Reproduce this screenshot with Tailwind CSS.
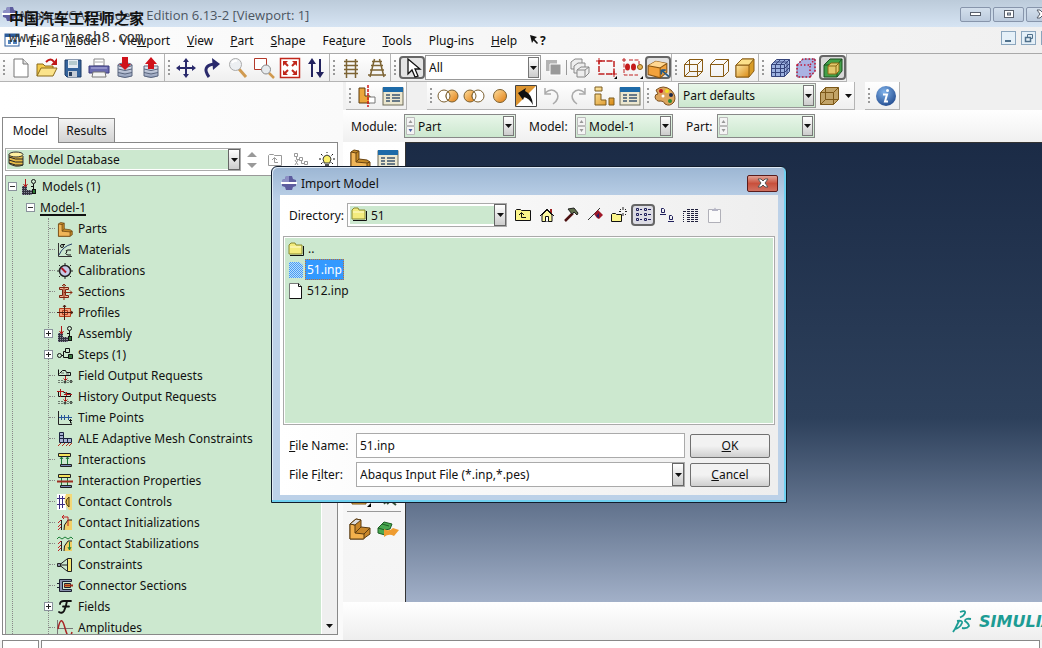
<!DOCTYPE html>
<html lang="en">
<head>
    <meta charset="UTF-8">
    <meta name="viewport" content="width=device-width, initial-scale=1.0">
    <title>Abaqus/CAE Student Edition 6.13-2 [Viewport: 1]</title>
    <script src="https://cdn.jsdelivr.net/npm/@tailwindcss/browser@4"></script>
</head>
<body class="flex h-screen flex-col overflow-hidden bg-[#f4f4f4] font-['Noto_Sans','Noto_Sans_CJK_SC',sans-serif] text-[12px] leading-[21px] text-[#111]">

    <!-- Shared gradients and repeated icons -->
    <svg class="absolute size-0" aria-hidden="true">
        <defs>
            <linearGradient id="gold" x1="0" y1="0" x2="1" y2="1"><stop offset="0" stop-color="#fdeaa8"/><stop offset="1" stop-color="#d98a14"/></linearGradient>
            <linearGradient id="orange" x1="0" y1="0" x2="1" y2="1"><stop offset="0" stop-color="#ffe0a0"/><stop offset="1" stop-color="#e07c10"/></linearGradient>
            <linearGradient id="steel" x1="0" y1="0" x2="0" y2="1"><stop offset="0" stop-color="#e8ecf4"/><stop offset="1" stop-color="#8f9cb8"/></linearGradient>
            <radialGradient id="ball" cx=".4" cy=".3" r=".8"><stop offset="0" stop-color="#7fb2ea"/><stop offset="1" stop-color="#1c4488"/></radialGradient>
            <pattern id="dither" width="2" height="2" patternUnits="userSpaceOnUse"><rect width="2" height="2" fill="#b4dcff"/><path d="M0 0h1v1H0zM1 1h1v1H1z" fill="#4a9cf0"/></pattern>
            <symbol id="i-arrow" viewBox="0 0 7 4"><path d="M0 0h7L3.500 4z" fill="#111"/></symbol>
            <symbol id="i-app" viewBox="0 0 16 16">
                <path d="M5 1h6l1 3 3 1v6l-3 1-1 3H5l-1-3-3-1V5l3-1z" fill="#5d5c9e"/><path d="M5 1h3v6H1V5l3-1z" fill="#8d8fc4"/><path d="M0 7h16v2H0z" fill="#fff"/>
            </symbol>
            <symbol id="i-folder" viewBox="0 0 16 14">
                <path d="M1 12V3l2-2h4l1 2h6v9z" fill="#f3ec7e" stroke="#8a8a30"/><path d="M2 13.500h13.500V4" fill="none" stroke="#111"/><path d="M2 5h11" stroke="#fffbd0"/>
            </symbol>
            <symbol id="i-table" viewBox="0 0 22 22">
                <rect x="1" y="3" width="20" height="17" fill="#ece7cf" stroke="#6d6a58"/><rect x="1" y="2" width="20" height="5" fill="#1d6aa8"/>
                <path d="M4 10h4M4 13h4M4 16h4M10 10h8M10 13h8M10 16h8" stroke="#3b5670" stroke-width="1.500"/>
            </symbol>
            <symbol id="i-part" viewBox="0 0 22 22">
                <path d="M2 4l3-2 5 1v8l8 1 3 2v5l-3 2H2z" fill="#c58a28" stroke="#6a4410"/><path d="M2 4l5 1v9l11 1v6H2z" fill="#f0b558" stroke="#6a4410"/><path d="M7 5l3-2M7 14l3-3M18 15l3-1" stroke="#6a4410"/>
            </symbol>
            <symbol id="i-assembly" viewBox="0 0 16 16">
                <path d="M1 7h5v4h5v5H1z" fill="#8b8b9c"/><path d="M1 8.500h5M1 10.500h5M1 12.500h10M1 14.500h10M2.500 7v9M4.500 7v9M6.500 11v5M8.500 11v5" stroke="#333340"/>
                <path d="M4.500 0v8M2.500 5l2 3 2-3" stroke="#b01818" fill="none"/>
                <circle cx="12.500" cy="2.500" r="2" fill="none" stroke="#111"/><path d="M12.500 5v6M10 7.500h3" stroke="#111"/><rect x="11.500" y="10.500" width="3" height="4" fill="#2e7a36" stroke="#111"/>
            </symbol>
        </defs>
    </svg>

    <!-- Title bar -->
    <header class="flex h-[27px] shrink-0 items-center bg-linear-to-b from-[#bccbda] to-[#d6e4f3] pl-0.5">
        <svg class="size-4"><use href="#i-app"/></svg>
        <h1 class="grow pt-1 font-['Open_Sans',sans-serif] text-[13px] text-[#4c5561]">Abaqus/CAE Student Edition 6.13-2 [Viewport: 1]</h1>
        <div class="-mr-[15px] flex h-4 gap-0.5 pt-px text-[#59606c]">
            <button aria-label="Minimize" class="grid w-[31px] place-items-center rounded-xs border border-[#8795ab] bg-linear-to-b from-[#d3dfec] to-[#bccbdd]"><svg class="h-1.5 w-3" viewBox="0 0 12 6"><rect x=".5" y="1.500" width="10" height="3" fill="#fff" stroke="currentColor"/></svg></button>
            <button aria-label="Restore" class="grid w-[31px] place-items-center rounded-xs border border-[#8795ab] bg-linear-to-b from-[#d3dfec] to-[#bccbdd]"><svg class="h-2.5 w-3" viewBox="0 0 12 10"><rect x="1.500" y="1.500" width="9" height="7" fill="#fff" stroke="currentColor"/><rect x="4.500" y="4" width="3" height="2" fill="#bccbdd" stroke="currentColor"/></svg></button>
            <button aria-label="Close" class="grid w-[31px] place-items-center rounded-xs border border-[#8795ab] bg-linear-to-b from-[#d3dfec] to-[#bccbdd]"><svg class="h-2.5 w-3" viewBox="0 0 12 10"><path d="M1 1h3l2 2 2-2h3L8 5l3 4H8L6 7 4 9H1l3-4z" fill="#fff" stroke="currentColor"/></svg></button>
        </div>
    </header>

    <!-- Menu bar -->
    <nav class="flex h-[26px] shrink-0 items-center bg-linear-to-r from-[#fdfdfd] to-[#f0f0f0] pl-1">
        <svg class="mr-2.5 size-4" viewBox="0 0 16 16"><rect x="1" y="2" width="14" height="12" fill="#fff" stroke="#2c5c9c"/><path d="M1 2h14v3H1z" fill="#2c5c9c"/><path d="M4 8h3v4H4zM9 8h4v4H9z" fill="#4f81bd"/></svg>
        <div class="flex grow items-center gap-[17px]">
            <a href="#" class="w-[18px]"><u>F</u>ile</a>
            <a href="#" class="w-[38px]"><u>M</u>odel</a>
            <a href="#" class="w-[50px]">Vie<u>w</u>port</a>
            <a href="#"><u>V</u>iew</a>
            <a href="#"><u>P</u>art</a>
            <a href="#"><u>S</u>hape</a>
            <a href="#">Fea<u>t</u>ure</a>
            <a href="#"><u>T</u>ools</a>
            <a href="#">Plu<u>g</u>-ins</a>
            <a href="#"><u>H</u>elp</a>
            <button aria-label="Context help" class="-ml-1 flex items-center font-bold"><svg class="size-2.5" viewBox="0 0 10 10"><path d="M0 0l7 2-2.500 2L8 8 7 9 3.500 5.500 2 8z" fill="#111"/></svg>?</button>
        </div>
        <div class="-mr-3.5 flex items-start gap-[5px] pb-1">
            <button aria-label="Minimize viewport" class="h-3.5 w-[15px] border border-[#8aa5bd] bg-[#e5f0f8]"><svg viewBox="0 0 13 12"><path d="M3 9h6" stroke="#50718c" stroke-width="2"/></svg></button>
            <button aria-label="Restore viewport" class="h-3.5 w-[15px] border border-[#8aa5bd] bg-[#e5f0f8]"><svg viewBox="0 0 13 12" fill="none" stroke="#50718c"><path d="M5.500 5V2.500h5v4H9"/><path d="M3.500 5.500h5v4h-5z" stroke-width="1.500"/></svg></button>
            <button aria-label="Close viewport" class="h-3.5 w-[15px] border border-[#8aa5bd] bg-[#e5f0f8]"></button>
        </div>
    </nav>

    <!-- Main toolbar -->
    <div class="flex h-[29px] shrink-0 border-t border-[#a9a9a9] bg-[#f0f0f0]">
        <div class="flex border-r border-b border-[#b4b4b4] bg-linear-to-b from-white to-[#efefef]">
            <span class="my-1.5 ml-[3px] w-[5px] border-l-2 border-dotted border-[#999]"></span>
            <button aria-label="New" class="grid w-[26px] place-items-center"><svg class="size-[22px]" viewBox="0 0 22 22"><path d="M4 2h9l5 5v13H4z" fill="#fff" stroke="#777"/><path d="M13 2v5h5" fill="#ddd" stroke="#777"/></svg></button>
            <button aria-label="Open" class="grid w-[26px] place-items-center"><svg class="size-[22px]" viewBox="0 0 22 22"><path d="M1 19V7h6l2 2h8v4" fill="#f4cb4c" stroke="#8a6a1a"/><path d="M1 19l4-8h16l-4 8z" fill="#fbe38a" stroke="#8a6a1a"/><path d="M10 5q5-5 8 0" fill="none" stroke="#c01818" stroke-width="2"/><path d="M21 1v7h-6z" fill="#c01818"/></svg></button>
            <button aria-label="Save" class="grid w-[26px] place-items-center"><svg class="size-[22px]" viewBox="0 0 22 22"><path d="M3 3h16v17H5l-2-2z" fill="#35639b" stroke="#1f3c66"/><path d="M6 3h10v8H6z" fill="#e4ebf3"/><path d="M7 5h8M7 7h8" stroke="#8aa"/><path d="M6 14h9v6H6z" fill="#c5ccd6"/><path d="M7 15h3v4H7z" fill="#263c5c"/></svg></button>
            <button aria-label="Print" class="grid w-[26px] place-items-center"><svg class="size-[22px]" viewBox="0 0 22 22"><path d="M6 2h10v7H6z" fill="#fff" stroke="#888"/><path d="M7 5h8" stroke="#aaa"/><path d="M1 9h20v7H1z" fill="#6a6bb0" stroke="#3b3b7c"/><path d="M3 11h16" stroke="#b8b8e0"/><path d="M5 15h12l1 5H4z" fill="#f4f4f4" stroke="#777"/></svg></button>
            <button aria-label="Save to database" class="grid w-[26px] place-items-center"><svg class="size-[22px]" viewBox="0 0 22 22"><g fill="url(#steel)" stroke="#59657e"><path d="M4 8v11q7 3 14 0V8z"/><path d="M4 12q7 3 14 0M4 15.500q7 3 14 0" fill="none"/><ellipse cx="11" cy="8" rx="7" ry="2"/></g><path d="M8 0h6v7h3l-6 6-6-6h3z" fill="#d0121b"/></svg></button>
            <button aria-label="Load from database" class="grid w-[26px] place-items-center"><svg class="size-[22px]" viewBox="0 0 22 22"><g fill="url(#steel)" stroke="#59657e"><path d="M4 9v10q7 3 14 0V9z"/><path d="M4 12q7 3 14 0M4 15.500q7 3 14 0" fill="none"/></g><path d="M8 12h6V7h3l-6-7-6 7h3z" fill="#d0121b"/></svg></button>
        </div>
        <div class="flex border-r border-b border-[#b4b4b4] bg-linear-to-b from-white to-[#efefef]">
            <span class="my-1.5 ml-[3px] w-[5px] border-l-2 border-dotted border-[#999]"></span>
            <button aria-label="Pan" class="grid w-[26px] place-items-center"><svg class="size-[22px]" viewBox="0 0 22 22"><path d="M11 4v14M4 11h14" stroke="#2a2a6c" stroke-width="2"/><path d="M11 1l3 4H8zM11 21l3-4H8zM1 11l4-3v6zM21 11l-4-3v6z" fill="#2a2a6c"/></svg></button>
            <button aria-label="Rotate" class="grid w-[26px] place-items-center"><svg class="size-[22px]" viewBox="0 0 22 22"><path d="M8 20Q0 9 13 7" fill="none" stroke="#2a2a6c" stroke-width="3"/><path d="M11 1l8 6-7 6z" fill="#2a2a6c"/></svg></button>
            <button aria-label="Magnify" class="grid w-[26px] place-items-center"><svg class="size-[22px]" viewBox="0 0 22 22"><path d="M12 12l7 8" stroke="#d09a50" stroke-width="3"/><circle cx="8.500" cy="7.500" r="6" fill="#eceff2" stroke="#aaa"/><path d="M5 6q2-3 5-2" fill="none" stroke="#fff" stroke-width="2"/></svg></button>
            <button aria-label="Box zoom" class="grid w-[26px] place-items-center"><svg class="size-[22px]" viewBox="0 0 22 22"><path d="M1.500 1.500h12v11h-12z" fill="#fff" stroke="#b3392a"/><path d="M16 16l5 5" stroke="#d09a50" stroke-width="2.500"/><circle cx="13" cy="12.500" r="4.500" fill="#e6eaed" stroke="#888"/></svg></button>
            <button aria-label="Auto fit" class="grid w-[26px] place-items-center"><svg class="size-[22px]" viewBox="0 0 22 22"><path d="M1.500 1.500h19v19h-19z" fill="#fff" stroke="#c1281c" stroke-width="1.500"/><path d="M4 4h5L4 9zM18 4v5l-5-5zM4 18v-5l5 5zM18 18h-5l5-5z" fill="#c1281c"/><path d="M5 5l4 4M17 5l-4 4M5 17l4-4M17 17l-4-4" stroke="#c1281c" stroke-width="2"/></svg></button>
            <button aria-label="Cycle views" class="grid w-[26px] place-items-center"><svg class="size-[22px]" viewBox="0 0 22 22"><path d="M7 4v16M15 2v16" stroke="#22225e" stroke-width="2"/><path d="M7 1l4 6H3zM15 21l4-6h-8z" fill="#22225e"/></svg></button>
        </div>
        <div class="flex border-r border-b border-[#b4b4b4] bg-linear-to-b from-white to-[#efefef]">
            <span class="my-1.5 ml-[3px] w-[5px] border-l-2 border-dotted border-[#999]"></span>
            <button aria-label="Parallel view" class="grid w-[26px] place-items-center"><svg class="size-[22px]" viewBox="0 0 22 22" fill="none" stroke="#7d6434" stroke-width="1.500"><path d="M6.500 2v19M15.500 2v19M4 4.500h14M4 8.500h14M4 12.500h14M4 16.500h14" /></svg></button>
            <button aria-label="Perspective view" class="grid w-[26px] place-items-center"><svg class="size-[22px]" viewBox="0 0 22 22" fill="none" stroke="#7d6434" stroke-width="1.500"><path d="M8.500 2L4 20M13.500 2L18 20M6 4.500h10M5 8.500h12M4 13h14M2 18h18"/></svg></button>
        </div>
        <div class="flex border-r border-b border-[#b4b4b4] bg-linear-to-b from-white to-[#efefef]">
            <span class="my-1.5 ml-[3px] w-[5px] border-l-2 border-dotted border-[#999]"></span>
            <button aria-label="Select" class="my-0.5 grid w-[26px] place-items-center rounded border-2 border-[#666] bg-[#e4e4e4]"><svg class="size-5" viewBox="0 0 20 20"><path d="M6 1v15l4-4 3 7 3-1-3-7h5z" fill="#fff" stroke="#111" stroke-width="1.300"/></svg></button>
            <span class="relative my-px flex">
                <select aria-label="Selection filter" class="w-[116px] appearance-none border border-[#999] bg-white pl-[3px]"><option>All</option></select>
                <span class="pointer-events-none absolute inset-y-0.5 right-0.5 grid w-[11px] place-items-center border border-[#777] bg-linear-to-b from-white to-[#ccc]"><svg class="h-1 w-[7px]"><use href="#i-arrow"/></svg></span>
            </span>
            <button aria-label="Selection options" class="grid w-[25px] place-items-center"><svg class="size-[22px]" viewBox="0 0 22 22"><path d="M3 3h11v11H3z" fill="#b4b4b4"/><path d="M7 7h11v11H7z" fill="#999" stroke="#fff"/></svg></button>
            <span class="my-1.5 w-px bg-[#999]"></span>
            <button aria-label="Highlight" class="grid w-[26px] place-items-center"><svg class="size-[22px]" viewBox="0 0 22 22"><g fill="#eee" stroke="#888"><path d="M2 5l4-3h7v7l-4 3H2z"/><path d="M5 9l4-3h7v7l-4 3H5z"/><path d="M8 13l4-3h8v6l-4 4H8z"/><path d="M8 13h8v7M16 13l4-3"/></g></svg></button>
            <button aria-label="Drag shape" class="grid w-[26px] place-items-center"><svg class="size-[22px]" viewBox="0 0 22 22"><path d="M4 4h15v13H4z" fill="none" stroke="#c02020" stroke-width="1.500" stroke-dasharray="6 1.500"/><path d="M1 4h6M4 1v6M16 17h6M19 14v6" stroke="#c02020"/><path d="M22 19v3h-3z"/></svg></button>
            <button aria-label="Selection entities" class="grid w-[26px] place-items-center"><svg class="size-[22px]" viewBox="0 0 22 22"><path d="M1 3h5M3 1v17h14M8 3h10v4" fill="none" stroke="#c02020" stroke-dasharray="4 1.500"/><ellipse cx="6.500" cy="10" rx="2.500" ry="3.500" fill="#c51b1b"/><ellipse cx="12.500" cy="10" rx="2.500" ry="3.500" fill="#c51b1b"/><circle cx="19" cy="10" r="2.500" fill="#e8b85a" stroke="#8a5c10"/><path d="M22 19v3h-3z"/></svg></button>
            <button aria-label="Interior selection" class="my-0.5 grid w-[26px] place-items-center rounded border-2 border-[#666] bg-[#e0e0e0]"><svg class="size-[22px]" viewBox="0 0 20 20"><path d="M1 7l7-4 10 2v8l-6 5-11-3z" fill="#f2a23c" stroke="#8a5410"/><path d="M1 7l7-4 10 2-6 4z" fill="#ffd792"/><path d="M1 7l11 2v9M12 9l6-4" fill="none" stroke="#8a5410"/><path d="M13 11l7 6M13 11h4M13 11v4" stroke="#255a86" stroke-width="1.500"/></svg></button>
        </div>
        <div class="flex border-r border-b border-[#b4b4b4] bg-linear-to-b from-white to-[#efefef]">
            <span class="my-1.5 ml-[3px] w-[5px] border-l-2 border-dotted border-[#999]"></span>
            <button aria-label="Wireframe" class="grid w-[26px] place-items-center"><svg class="size-[22px]" viewBox="0 0 22 22" fill="none" stroke="#8a5c14"><path d="M2.500 7.500h13v12h-13zM2.500 7.500l5-5h13v12l-5 5M15.500 7.500l5-5M7.500 2.500v12h13M7.500 14.500l-5 5"/></svg></button>
            <button aria-label="Hidden" class="grid w-[26px] place-items-center"><svg class="size-[22px]" viewBox="0 0 22 22" fill="none" stroke="#8a5c14"><path d="M2.500 7.500h13v12h-13zM2.500 7.500l5-5h13v12l-5 5M15.500 7.500l5-5"/></svg></button>
            <button aria-label="Shaded" class="grid w-[26px] place-items-center"><svg class="size-[22px]" viewBox="0 0 22 22" stroke="#8a5c14"><path d="M2 8l6-6h12v12l-5 6H2z" fill="#d79c28"/><path d="M2 8h13v12H2z" fill="url(#gold)"/><path d="M2 8l6-6h12l-5 6z" fill="#fbe08a"/></svg></button>
        </div>
        <div class="flex border-r border-b border-[#b4b4b4] bg-linear-to-b from-white to-[#efefef]">
            <span class="my-1.5 ml-[3px] w-[5px] border-l-2 border-dotted border-[#999]"></span>
            <button aria-label="Show mesh" class="grid w-[26px] place-items-center"><svg class="size-[22px]" viewBox="0 0 22 22" fill="none" stroke="#36457c"><path d="M2.500 7.500l5-5h13v12l-5 5h-13z" fill="#9db2e0"/><path d="M2.500 7.500h13v12M15.500 7.500l5-5M2.500 11.500h13l5-5M2.500 15.500h13l5-5M6.500 19.500v-12l5-5M11.500 19.500v-12l5-5M5 5h13v12"/></svg></button>
            <button aria-label="Show seeds" class="grid w-[26px] place-items-center"><svg class="size-[22px]" viewBox="0 0 22 22"><path d="M2 8l6-6h12v12l-5 6H2z" fill="#aab2e2" stroke="#7a80b0"/><path d="M2 8h13v12H2zM2 8l6-6h12v12l-5 6M15 8l5-6" fill="none" stroke="#c01838" stroke-width="1.500" stroke-dasharray="1.500 2"/></svg></button>
            <button aria-label="Show native mesh" class="my-px grid w-[27px] place-items-center rounded border-2 border-[#666] bg-[#d8d8d8]"><svg class="size-[22px]" viewBox="0 0 22 22" stroke="#1c5020"><path d="M2 8l6-6h12v12l-5 6H2z" fill="#42a048"/><path d="M2 8h13v12M15 8l5-6" fill="none"/><path d="M6 9l3-3h8v8l-3 3H6z" fill="#e2c86c" stroke="#8a6a14"/><path d="M6 9h8v8M14 9l3-3" fill="none" stroke="#8a6a14"/></svg></button>
        </div>
    </div>

    <div class="flex min-h-0 grow">
        <!-- Model tree -->
        <aside class="flex w-[343px] shrink-0 flex-col bg-linear-to-r from-white to-[#fafafa] pt-[35px] pr-[5px] pb-[5px] pl-0.5">
            <div class="flex items-end">
                <button class="relative z-10 -mb-px h-[26px] w-[57px] border border-b-0 border-[#888] bg-white">Model</button>
                <button class="h-6 w-14 border border-b-0 border-l-0 border-[#888] bg-linear-to-b from-[#f4f4f4] to-[#d2d2d2]">Results</button>
            </div>
            <div class="flex min-h-0 grow flex-col border border-[#888] bg-white pt-[5px] pl-0.5">
                <div class="flex h-[23px] shrink-0 items-center">
                    <span class="relative flex">
                        <select aria-label="Tree source" class="h-[23px] w-[236px] appearance-none border border-[#aaa] bg-[#cce8cf] pl-[22px] outline-1 -outline-offset-2 outline-white"><option>Model Database</option></select>
                        <svg class="pointer-events-none absolute top-[3px] left-[3px] size-4" viewBox="0 0 16 16"><path d="M1 3.500v9Q8 17 15 14v-9" fill="#e8bc48" stroke="#333"/><path d="M1 6q6 3 14 2M1 9q6 3 14 2M1 12q6 3 14 2" fill="none" stroke="#222"/><ellipse cx="8" cy="3.500" rx="7" ry="2.500" fill="#fff0a0" stroke="#333"/></svg>
                        <span class="pointer-events-none absolute inset-y-px right-px grid w-3 place-items-center border border-[#666] bg-linear-to-b from-white to-[#ccc]"><svg class="h-1 w-[7px]"><use href="#i-arrow"/></svg></span>
                    </span>
                    <div class="flex grow justify-between pr-0.5 pl-1.5">
                        <button aria-label="Filter level"><svg class="h-4 w-2.5" viewBox="0 0 10 16"><path d="M5 0l5 5H0zM5 16l5-5H0z" fill="#999"/></svg></button>
                        <button aria-label="Up one level"><svg class="size-4" viewBox="0 0 16 16" fill="none" stroke="#999"><path d="M1.500 13.500v-10l1-1h4l1 1h7v10z"/><path d="M11 10.500H7.500V6M5 8l2.500-2.500L10 8"/></svg></button>
                        <button aria-label="Link"><svg class="size-4" viewBox="0 0 16 16" fill="none" stroke="#999"><path d="M1.500 1.500h3v3h-3zM6.500 5.500h3v3h-3zM11.500 9.500h3v3h-3zM3.500 5v2.500h3M8.500 9v2.500h3M2 8l3 5M2 13l3-5"/></svg></button>
                        <button aria-label="Tips"><svg class="size-4" viewBox="0 0 16 16"><path d="M5 10Q3 7 5 4.500q3-3 6 0Q13 7 11 10v1H5z" fill="#fbf16a" stroke="#333"/><path d="M6 12h4v3H6z" fill="#555"/><path d="M8 0v1M2 2l1.500 1.500M14 2l-1.500 1.500M0 7h2M14 7h2M2 12l1.500-1.500M14 12l-1.500-1.500" stroke="#111"/></svg></button>
                    </div>
                </div>
                <div class="mt-1 flex min-h-0 grow border-t border-l border-[#999]">
                    <ul class="grow overflow-hidden bg-[#cce8cf] pl-1.5">
                        <li>
                            <div class="flex h-[21px] items-center">
                                <button aria-label="Collapse Models" class="-ml-1 grid size-[9px] place-items-center border border-[#8a929c] bg-white"><span class="h-px w-[5px] bg-[#333]"></span></button>
                                <svg class="ml-1 size-4"><use href="#i-assembly"/></svg>
                                <span class="ml-[5px]">Models (1)</span>
                            </div>
                            <ul class="border-l border-dotted border-[#888]">
                                <li>
                                    <div class="flex h-[21px] items-center pl-[13px]">
                                        <button aria-label="Collapse Model-1" class="grid size-[9px] place-items-center border border-[#8a929c] bg-white"><span class="h-px w-[5px] bg-[#333]"></span></button>
                                        <span class="ml-[5px] h-4 border-b-2 border-[#111] leading-4">Model-1</span>
                                    </div>
                                    <ul class="ml-[35px] border-l border-dotted border-[#888]">
                                        <li class="flex h-[21px] items-center"><span class="mr-0.5 w-1.5 border-t border-dotted border-[#888]"></span><svg class="mr-[5px] size-4" viewBox="0 0 22 22"><use href="#i-part"/></svg>Parts</li>
                                        <li class="flex h-[21px] items-center"><span class="mr-0.5 w-1.5 border-t border-dotted border-[#888]"></span><svg class="mr-[5px] size-4" viewBox="0 0 16 16" fill="none" stroke="#24406a"><path d="M1.500 1v13.500H15" stroke="#333"/><path d="M2 13Q6 4 15 2"/><circle cx="5" cy="4" r="1.500" stroke="#111"/><path d="M5 2.500h3M14 8h-3q-3 0-1 2-3 2 1 3h3" stroke="#111"/></svg>Materials</li>
                                        <li class="flex h-[21px] items-center"><span class="mr-0.5 w-1.5 border-t border-dotted border-[#888]"></span><svg class="mr-[5px] size-4" viewBox="0 0 16 16"><circle cx="8" cy="8" r="5.500" fill="#c7cbe8" stroke="#222" stroke-width="1.500"/><path d="M8 0v2M8 14v2M0 8h2M14 8h2M13 3l1-1M2 2l1 1M13 13l1 1M3 13l-1 1" stroke="#222"/><path d="M4.500 5L9 9.500" stroke="#b01828" stroke-width="2"/></svg>Calibrations</li>
                                        <li class="flex h-[21px] items-center"><span class="mr-0.5 w-1.5 border-t border-dotted border-[#888]"></span><svg class="mr-[5px] size-4" viewBox="0 0 16 16"><path d="M2.500 3.500h9v2h-3v6h3v2h-9v-2h3v-6h-3z" fill="#f4b090" stroke="#7a2410"/><path d="M7 0v16M7 8.500h8M13 6.500l2 2-2 2M5 2l2-2 2 2" fill="none" stroke="#8a2a10"/></svg>Sections</li>
                                        <li class="flex h-[21px] items-center"><span class="mr-0.5 w-1.5 border-t border-dotted border-[#888]"></span><svg class="mr-[5px] size-4" viewBox="0 0 16 16"><path d="M2.500 3.500h11v8h-11z" fill="#f6a27c" stroke="#b8401c"/><path d="M5.500 5.500h5v4h-5z" fill="none" stroke="#b8401c"/><path d="M7.500 0v15M0 7.500h16M6 2l1.500-2L9 2M14 6l2 1.500L14 9" fill="none" stroke="#4c1c10"/></svg>Profiles</li>
                                        <li class="flex h-[21px] items-center"><button aria-label="Expand Assembly" class="mr-[3px] -ml-[5px] grid size-[9px] shrink-0 place-items-center border border-[#8a929c] bg-white"><svg class="size-[7px]" viewBox="0 0 7 7"><path d="M1 3.500h5M3.500 1v5" stroke="#222"/></svg></button><svg class="mr-[5px] ml-px size-4"><use href="#i-assembly"/></svg>Assembly</li>
                                        <li class="flex h-[21px] items-center"><button aria-label="Expand Steps" class="mr-[3px] -ml-[5px] grid size-[9px] shrink-0 place-items-center border border-[#8a929c] bg-white"><svg class="size-[7px]" viewBox="0 0 7 7"><path d="M1 3.500h5M3.500 1v5" stroke="#222"/></svg></button><svg class="mr-[5px] ml-px size-4" viewBox="0 0 16 16" fill="none" stroke="#111"><circle cx="2.500" cy="8.500" r="2"/><path d="M4.500 8.500h2v-4h2M8.500 1.500h4v4h-4zM6.500 8.500v2h5"/><path d="M11.500 7.500h4v4h-4z" fill="#3c7a40"/></svg>Steps (1)</li>
                                        <li class="flex h-[21px] items-center"><span class="mr-0.5 w-1.5 border-t border-dotted border-[#888]"></span><svg class="mr-[5px] size-4" viewBox="0 0 16 16" fill="none" stroke="#111"><path d="M1.500 1.500v6h12v-3h-4l-1-2h-3l-3 3"/><path d="M4 5h3M9 6h3" stroke="#666"/><path d="M8.500 8v4M6.500 10.500l2 2 2-2" stroke="#b01818"/><path d="M2 12v3M5 12v3M11 12v3" stroke-dasharray="1 1"/><circle cx="8" cy="14" r="1"/><circle cx="14" cy="13.500" r="1"/></svg>Field Output Requests</li>
                                        <li class="flex h-[21px] items-center"><span class="mr-0.5 w-1.5 border-t border-dotted border-[#888]"></span><svg class="mr-[5px] size-4" viewBox="0 0 16 16" fill="none" stroke="#111"><path d="M1.500 2.500v5h12v-3h-4l-4-2z"/><path d="M3.500 0v8M0 2.500h7M9.500 3v4M7 5.500h8M8.500 8v4M6.500 10.500l2 2 2-2" stroke="#b01818"/><path d="M2 12v3M5 12v3M11 12v3" stroke-dasharray="1 1"/><circle cx="8" cy="14" r="1"/><circle cx="14" cy="13.500" r="1"/></svg>History Output Requests</li>
                                        <li class="flex h-[21px] items-center"><span class="mr-0.5 w-1.5 border-t border-dotted border-[#888]"></span><svg class="mr-[5px] size-4" viewBox="0 0 16 16" fill="none"><path d="M1.500 1v13.500H15" stroke="#222"/><path d="M2 7.500h13M4.500 5v5M7.500 5v5M11.500 5v5" stroke="#26569a"/><path d="M13.500 9v4h1.500M12 10.500h3" stroke="#111"/></svg>Time Points</li>
                                        <li class="flex h-[21px] items-center"><span class="mr-0.5 w-1.5 border-t border-dotted border-[#888]"></span><svg class="mr-[5px] size-4" viewBox="0 0 16 16"><path d="M2.500 1.500h4v6h8v4h-12z" fill="#a9b4d4" stroke="#1c2440"/><path d="M2.500 4.500h4M2.500 7.500h4M6.500 7.500v4M10.500 7.500v4" stroke="#1c2440"/><path d="M1 15l3-3M5 15l3-3M9 15l3-3M12 15l3-3" stroke="#b83020"/></svg>ALE Adaptive Mesh Constraints</li>
                                        <li class="flex h-[21px] items-center"><span class="mr-0.5 w-1.5 border-t border-dotted border-[#888]"></span><svg class="mr-[5px] size-4" viewBox="0 0 16 16"><path d="M1.500 1.500h12v3h-12z" fill="#f5e45c" stroke="#222"/><path d="M4.500 5v7M10.500 5v7M3 7l1.500-2L6 7M9 7l1.500-2L12 7" fill="none" stroke="#1c7a38"/><path d="M3.500 12.500h11v2h-11z" fill="#7a88b8" stroke="#222"/></svg>Interactions</li>
                                        <li class="flex h-[21px] items-center"><span class="mr-0.5 w-1.5 border-t border-dotted border-[#888]"></span><svg class="mr-[5px] size-4" viewBox="0 0 16 16"><path d="M1.500 1.500h12v3h-12z" fill="#f5e45c" stroke="#222"/><path d="M4.500 5v7M10.500 5v7" fill="none" stroke="#1c7a38"/><path d="M0 8.500h16" stroke="#9c2c20" stroke-width="2"/><path d="M3.500 12.500h11v2h-11z" fill="#7a88b8" stroke="#222"/></svg>Interaction Properties</li>
                                        <li class="flex h-[21px] items-center"><span class="mr-0.5 w-1.5 border-t border-dotted border-[#888]"></span><svg class="mr-[5px] size-4" viewBox="0 0 16 16"><path d="M0 0h9v16H0z" fill="#fff"/><path d="M9 0h6v16h-3Q5 8 9 0z" fill="#f2d878"/><path d="M2.500 1v14M5.500 2v12M0 4.500h8M0 10.500h8" stroke="#3b2c80"/><path d="M12 3q-6 5 0 10z" fill="#d8b040" stroke="#4c3c10"/></svg>Contact Controls</li>
                                        <li class="flex h-[21px] items-center"><span class="mr-0.5 w-1.5 border-t border-dotted border-[#888]"></span><svg class="mr-[5px] size-4" viewBox="0 0 16 16"><path d="M15 5h-4q-5 5-4 10h8z" fill="#f2cf66"/><path d="M15 5h-4q-5 5-4 10" fill="none" stroke="#222"/><path d="M4.500 5v10" stroke="#222"/><path d="M1 8l3-3M1 12l3-3M1 15l3-3M5 2h6v9M7 0L5 2l2 2" fill="none" stroke="#c02020"/></svg>Contact Initializations</li>
                                        <li class="flex h-[21px] items-center"><span class="mr-0.5 w-1.5 border-t border-dotted border-[#888]"></span><svg class="mr-[5px] size-4" viewBox="0 0 16 16"><path d="M15 5h-4q-5 5-4 10h8z" fill="#f2cf66"/><path d="M15 5h-4q-5 5-4 10M4.500 5v10" fill="none" stroke="#222"/><path d="M1 8l3-3M1 12l3-3M1 15l3-3" stroke="#c02020"/><path d="M0 3l2-2 3 2 3-2 3 2 3-2 2 2M12.500 6v8M11 11l1.500 3L14 11" fill="none" stroke="#1c8038"/></svg>Contact Stabilizations</li>
                                        <li class="flex h-[21px] items-center"><span class="mr-0.5 w-1.5 border-t border-dotted border-[#888]"></span><svg class="mr-[5px] size-4" viewBox="0 0 16 16" fill="none" stroke="#222"><path d="M10.500 1.500h4v13h-4z" fill="#f6e874"/><path d="M10 2L3 7.500M10 14L3 8.500M3 8h7"/><path d="M.5 6.500h3v3h-3z" fill="#8b93a8"/></svg>Constraints</li>
                                        <li class="flex h-[21px] items-center"><span class="mr-0.5 w-1.5 border-t border-dotted border-[#888]"></span><svg class="mr-[5px] size-4" viewBox="0 0 16 16" fill="none" stroke="#1c2030"><path d="M14.500 1.500h-12v12h12v-2h-9v-8h9z" fill="#8790ac"/><path d="M0 5.500h3M0 9.500h3"/><path d="M7.500 5.500h6v4h-6z" fill="#f0d050"/><path d="M9 7.500h7M7 7.500h5" stroke="#a02c1c" stroke-width="2"/></svg>Connector Sections</li>
                                        <li class="flex h-[21px] items-center"><button aria-label="Expand Fields" class="mr-[3px] -ml-[5px] grid size-[9px] shrink-0 place-items-center border border-[#8a929c] bg-white"><svg class="size-[7px]" viewBox="0 0 7 7"><path d="M1 3.500h5M3.500 1v5" stroke="#222"/></svg></button><svg class="mr-[5px] ml-px size-4" viewBox="0 0 16 16" fill="none" stroke="#111" stroke-width="1.800" stroke-linecap="round"><path d="M3 5q0-3 4-3h7M10 2Q9 8 7 12q-2 3-5 1M6 7.500h6"/></svg>Fields</li>
                                        <li class="flex h-[21px] items-center"><span class="mr-0.5 w-1.5 border-t border-dotted border-[#888]"></span><svg class="mr-[5px] size-4" viewBox="0 0 16 16" fill="none"><path d="M.5 0v16M0 8.500h16" stroke="#777"/><path d="M1 9Q4-7 8 8t7 4" stroke="#a82424" stroke-width="1.500"/></svg>Amplitudes</li>
                                    </ul>
                                </li>
                            </ul>
                        </li>
                    </ul>
                    <div class="flex w-4 items-end justify-center border-l border-white bg-[#efefef] pb-1.5"><svg class="h-1 w-[7px]"><use href="#i-arrow"/></svg></div>
                </div>
            </div>
        </aside>

        <main class="flex min-w-0 grow flex-col">
            <!-- Secondary toolbar -->
            <div class="flex h-7 shrink-0 bg-[#f0f0f0] pl-[3px]">
                <div class="mr-5 flex border-r border-b border-[#b4b4b4] bg-linear-to-b from-white to-[#efefef]">
                    <span class="my-1.5 ml-[3px] w-[5px] border-l-2 border-dotted border-[#999]"></span>
                    <button aria-label="Part tool" class="grid w-[26px] place-items-center"><svg class="size-[22px]" viewBox="0 0 22 22"><path d="M3 3h6v8h5v7H3z" fill="#eba63c" stroke="#5c3c10"/><path d="M13 12h6v6h-6" fill="#fff" stroke="#777"/><path d="M12 0v22" stroke="#d01818" stroke-width="1.500" stroke-dasharray="3 1"/></svg></button>
                    <button aria-label="Part manager" class="grid w-[26px] place-items-center"><svg class="size-[22px]"><use href="#i-table"/></svg></button>
                </div>
                <div class="flex border-r border-b border-[#b4b4b4] bg-linear-to-b from-white to-[#efefef]">
                    <span class="my-1.5 ml-[3px] w-[5px] border-l-2 border-dotted border-[#999]"></span>
                    <button aria-label="Replace" class="grid w-[26px] place-items-center"><svg class="size-[22px]" viewBox="0 0 22 22" stroke="#7c6030"><circle cx="7" cy="11" r="6" fill="#fff"/><circle cx="15" cy="11" r="6" fill="url(#orange)"/><path d="M11 6.500q-4 4.500 0 9 4-4.500 0-9z" fill="#fff"/></svg></button>
                    <button aria-label="Remove" class="grid w-[26px] place-items-center"><svg class="size-[22px]" viewBox="0 0 22 22" stroke="#7c6030"><circle cx="7" cy="11" r="6" fill="url(#orange)"/><circle cx="15" cy="11" r="6" fill="#fff"/><path d="M11 6.500q-4 4.500 0 9 4-4.500 0-9z" fill="#fff"/></svg></button>
                    <button aria-label="Replace all" class="grid w-[26px] place-items-center"><svg class="size-[22px]" viewBox="0 0 22 22"><circle cx="11" cy="11" r="6.500" fill="url(#orange)" stroke="#7c6030"/></svg></button>
                    <button aria-label="Undo group" class="grid w-[26px] place-items-center"><svg class="size-[22px]" viewBox="0 0 22 22"><path d="M.5.500h21v21H.500z" fill="#fff" stroke="#444"/><path d="M1 1h20L1 21z" fill="#dc9430"/><path d="M3 8l8-5-1 3q7 3 8 14-4-7-9-8l-1 3z" fill="#111"/></svg></button>
                    <button aria-label="Undo" class="grid w-[26px] place-items-center"><svg class="size-[22px]" viewBox="0 0 22 22" fill="none" stroke="#aaa" stroke-width="1.500"><path d="M4 8q7-6 12 0 3 6-4 11M4 3v6h6"/></svg></button>
                    <button aria-label="Redo" class="grid w-[26px] place-items-center"><svg class="size-[22px]" viewBox="0 0 22 22" fill="none" stroke="#aaa" stroke-width="1.500"><path d="M18 8q-7-6-12 0-3 6 4 11M18 3v6h-6"/></svg></button>
                    <button aria-label="Display group" class="grid w-[26px] place-items-center"><svg class="size-[22px]" viewBox="0 0 22 22" fill="url(#gold)" stroke="#7c5c20"><path d="M2 2h7v4H2zM2 9h6v6h5v5H2zM16 13h5v7h-5z"/></svg></button>
                    <button aria-label="Display group manager" class="grid w-[26px] place-items-center"><svg class="size-[22px]"><use href="#i-table"/></svg></button>
                </div>
                <div class="mr-2.5 flex border-r border-b border-[#b4b4b4] bg-linear-to-b from-white to-[#efefef]">
                    <span class="my-1.5 ml-[3px] w-[5px] border-l-2 border-dotted border-[#999]"></span>
                    <button aria-label="Color code" class="grid w-[26px] place-items-center"><svg class="size-[22px]" viewBox="0 0 22 22"><path d="M2 5q7-6 15 0 6 6 3 12-4 5-9 2-1-3-4-3-5 1-6-4 0-3 3-3z" fill="#dca45c" stroke="#7c5020"/><circle cx="7" cy="6" r="2" fill="#c01818"/><circle cx="13" cy="6" r="2" fill="#f4e020"/><circle cx="17" cy="10" r="2" fill="#1c2a4c"/><circle cx="16" cy="16" r="2" fill="#2c8a38"/><circle cx="9" cy="11" r="1.500" fill="#fff"/></svg></button>
                    <span class="relative my-px flex">
                        <select aria-label="Color mapping" class="w-[138px] appearance-none border border-[#999] bg-linear-to-b from-[#e8f6e9] to-[#cce8cf] pl-1"><option>Part defaults</option></select>
                        <span class="pointer-events-none absolute inset-y-0.5 right-0.5 grid w-[11px] place-items-center border border-[#777] bg-linear-to-b from-white to-[#ccc]"><svg class="h-1 w-[7px]"><use href="#i-arrow"/></svg></span>
                    </span>
                    <button aria-label="Translucency" class="grid w-[26px] place-items-center"><svg class="size-[22px]" viewBox="0 0 22 22" fill="none" stroke="#7c5818"><path d="M2.500 7.500l5-5h13v12l-5 5h-13z" fill="#c2a468"/><path d="M2.500 7.500h13v12M15.500 7.500l5-5M7.500 2.500v12h13M7.500 14.500l-5 5"/></svg></button>
                    <button aria-label="Translucency options" class="grid w-3 place-items-center"><svg class="h-1 w-[7px]"><use href="#i-arrow"/></svg></button>
                </div>
                <div class="flex border-r border-b border-[#b4b4b4] bg-linear-to-b from-white to-[#efefef]">
                    <span class="my-1.5 ml-[3px] w-[5px] border-l-2 border-dotted border-[#999]"></span>
                    <button aria-label="Information" class="grid w-[26px] place-items-center"><svg class="size-[22px]" viewBox="0 0 22 22"><circle cx="11" cy="11" r="10" fill="url(#ball)"/><circle cx="12.500" cy="5.500" r="1.500" fill="#fff"/><path d="M8 9.500h4l-2 7h3" fill="none" stroke="#fff" stroke-width="2"/></svg></button>
                </div>
            </div>

            <!-- Context bar -->
            <div class="flex h-8 shrink-0 items-center bg-linear-to-b from-white to-[#f0f0f0] pl-2">
                <label for="module" class="w-[53px]">Module:</label>
                <span class="relative mr-[13px] flex">
                    <select id="module" class="h-6 w-[112px] appearance-none border border-[#888] bg-linear-to-b from-[#e8f6e9] to-[#cce8cf] pl-[13px]"><option>Part</option></select>
                    <svg class="pointer-events-none absolute top-[3px] left-0.5 h-[18px] w-2.5" viewBox="0 0 10 18"><path d="M.5.500h8v8h-8zM.5 9.500h8v8h-8z" fill="#f4f4f4" stroke="#bbb"/><path d="M4.500 3l2 3h-4z" fill="#999"/><path d="M4.500 15l2-3h-4z" fill="#4860a0"/></svg>
                    <span class="pointer-events-none absolute inset-y-0.5 right-0.5 grid w-[11px] place-items-center border border-[#777] bg-linear-to-b from-white to-[#ccc]"><svg class="h-1 w-[7px]"><use href="#i-arrow"/></svg></span>
                </span>
                <label for="model" class="w-[46px]">Model:</label>
                <span class="relative mr-[13px] flex">
                    <select id="model" class="h-6 w-[98px] appearance-none border border-[#888] bg-linear-to-b from-[#e8f6e9] to-[#cce8cf] pl-[13px]"><option>Model-1</option></select>
                    <svg class="pointer-events-none absolute top-[3px] left-0.5 h-[18px] w-2.5" viewBox="0 0 10 18"><path d="M.5.500h8v8h-8zM.5 9.500h8v8h-8z" fill="#f4f4f4" stroke="#bbb"/><path d="M4.500 3l2 3h-4zM4.500 15l2-3h-4z" fill="#999"/></svg>
                    <span class="pointer-events-none absolute inset-y-0.5 right-0.5 grid w-[11px] place-items-center border border-[#777] bg-linear-to-b from-white to-[#ccc]"><svg class="h-1 w-[7px]"><use href="#i-arrow"/></svg></span>
                </span>
                <label for="part" class="w-[31px]">Part:</label>
                <span class="relative flex">
                    <select id="part" class="h-6 w-[98px] appearance-none border border-[#888] bg-linear-to-b from-[#e8f6e9] to-[#cce8cf] pl-[13px]"><option></option></select>
                    <svg class="pointer-events-none absolute top-[3px] left-0.5 h-[18px] w-2.5" viewBox="0 0 10 18"><path d="M.5.500h8v8h-8zM.5 9.500h8v8h-8z" fill="#f4f4f4" stroke="#bbb"/><path d="M4.500 3l2 3h-4zM4.500 15l2-3h-4z" fill="#999"/></svg>
                    <span class="pointer-events-none absolute inset-y-0.5 right-0.5 grid w-[11px] place-items-center border border-[#777] bg-linear-to-b from-white to-[#ccc]"><svg class="h-1 w-[7px]"><use href="#i-arrow"/></svg></span>
                </span>
            </div>

            <div class="flex min-h-0 grow">
                <!-- Toolbox -->
                <div class="flex w-[62px] shrink-0 flex-col bg-linear-to-b from-white to-[#f4f4f4] px-1 pt-1.5">
                    <div class="flex gap-1.5 px-0.5">
                        <button aria-label="Create part"><svg class="size-[22px]"><use href="#i-part"/></svg></button>
                        <button aria-label="Part manager"><svg class="size-[22px]"><use href="#i-table"/></svg></button>
                    </div>
                    <div class="mt-[315px] flex gap-1.5 border-b border-[#999] px-0.5 pb-1">
                        <button aria-label="Partition"><svg class="size-[22px]" viewBox="0 0 22 22"><path d="M3 8h14v11H3z" fill="#eab050" stroke="#7a5010"/><path d="M22 18v4h-4z"/></svg></button>
                        <button aria-label="Datum"><svg class="size-[22px]" viewBox="0 0 22 22"><path d="M5 12l3 7M14 16l5 4M10 19l6-6" stroke="#385038" stroke-width="2"/></svg></button>
                    </div>
                    <div class="mt-1.5 flex gap-1.5 px-0.5">
                        <button aria-label="Edit mesh"><svg class="size-[22px]" viewBox="0 0 22 22"><path d="M1 6l6-5 5 1v7l9 1v6l-7 5H1z" fill="#c9872a" stroke="#5c3c10"/><path d="M1 6l5 1v8l9 1v5H1z" fill="#f2b04c" stroke="#5c3c10"/><path d="M1 6l6-5 5 1-6 5z" fill="#ddd" stroke="#5c3c10"/><path d="M15 16l6-6M6 15l6-6" stroke="#5c3c10"/></svg></button>
                        <button aria-label="Repair geometry"><svg class="size-[22px]" viewBox="0 0 22 22"><path d="M1 10l6-6 8 2-2 5-5 1v5l-7-2z" fill="#48a850" stroke="#1c5c24"/><path d="M1 10l7 2M5 6l7 2" stroke="#1c5c24"/><path d="M7 11q5 3 9-1l6 2-5 6q-5-3-10 1z" fill="#ee9c30"/></svg></button>
                    </div>
                </div>
                <!-- Viewport canvas -->
                <div class="grow border-t border-l border-[#333] bg-linear-to-b from-[#1b2b46] via-[#2d405b] via-60% to-[#a2b0c8]"></div>
            </div>
            <footer class="flex h-[38px] shrink-0 items-center justify-end overflow-hidden bg-linear-to-b from-white to-[#eeeeee]">
                <svg class="mr-1 size-6 shrink-0" viewBox="0 0 24 24" fill="none" stroke="#1d9c94" stroke-width="1.800"><path d="M9 3q6-2 5 1-1 3-5 4.500"/><path d="M6 12q6-1 5 2-2 5-7 6l4-8M4 20l-2 3"/><path d="M20 10q-6-1-6 2 4 3 4 5-2 3-7 2"/></svg>
                <span class="-mr-3 font-['DejaVu_Sans',sans-serif] text-[16px] font-bold text-[#1d9c94] italic">SIMULIA</span>
            </footer>
        </main>
    </div>

    <!-- Message area -->
    <div class="flex h-2 shrink-0 gap-0.5 px-0.5">
        <div class="w-[37px] border border-b-0 border-[#888] bg-white"></div>
        <div class="grow border border-b-0 border-[#888] bg-white"></div>
    </div>

    <!-- Import dialog -->
    <section role="dialog" aria-labelledby="dialog-title" class="absolute top-[166px] left-[271px] flex w-[516px] flex-col rounded-t-md border border-[#111c2c] bg-linear-to-b from-[#9cb6d3] to-[#bcd1e8] to-10% px-2 pb-[7px] shadow-[inset_-1px_-1px_0_1px_#6fd0f0,inset_1px_1px_0_#dfeaf6]">
        <div class="flex h-7 items-center gap-1 pt-1 pl-px">
            <svg class="size-4"><use href="#i-app"/></svg>
            <h2 id="dialog-title" class="grow">Import Model</h2>
            <button aria-label="Close dialog" class="grid h-[17px] w-[31px] place-items-center rounded-xs border border-[#5a1c1c] bg-linear-to-b from-[#e0a094] via-[#c8503c] via-50% to-[#d07060]"><svg class="h-2.5 w-3" viewBox="0 0 12 10"><path d="M1 1h3l2 2 2-2h3L8 5l3 4H8L6 7 4 9H1l3-4z" fill="#fff" stroke="#555"/></svg></button>
        </div>
        <form class="flex h-[300px] flex-col bg-linear-to-r from-white to-[#eeeeee] px-[3px] pt-2">
            <div class="flex h-6 items-center pl-1.5">
                <label for="directory" class="w-[58px]">Directory:</label>
                <span class="relative mr-1 flex">
                    <select id="directory" class="h-6 w-[160px] appearance-none border border-[#aaa] bg-[#cce8cf] pl-[23px] outline-2 -outline-offset-3 outline-white"><option>51</option></select>
                    <svg class="pointer-events-none absolute top-1 left-1 h-3.5 w-4"><use href="#i-folder"/></svg>
                    <span class="pointer-events-none absolute inset-y-px right-px grid w-3 place-items-center border border-[#666] bg-linear-to-b from-white to-[#ccc]"><svg class="h-1 w-[7px]"><use href="#i-arrow"/></svg></span>
                </span>
                <button type="button" aria-label="Parent directory" class="grid w-6 place-items-center"><svg class="size-4" viewBox="0 0 16 16"><path d="M.5 13.500v-10l1-1h4l1 1h9v10z" fill="#fbf58a" stroke="#111"/><path d="M11 10.500H6.500V6M4 8l2.500-2.500L9 8" fill="none" stroke="#111"/></svg></button>
                <button type="button" aria-label="Home" class="grid w-6 place-items-center"><svg class="size-4" viewBox="0 0 16 16"><path d="M11 2h2v4h-2z" fill="#a02020"/><path d="M3 8v6.500h10V8L8 3z" fill="#fbf8a0" stroke="#111"/><path d="M1 9l7-7 7 7" fill="none" stroke="#111"/><path d="M6.500 14.500v-5h3v5" fill="#fff" stroke="#111"/></svg></button>
                <button type="button" aria-label="Work directory" class="grid w-6 place-items-center"><svg class="size-4" viewBox="0 0 16 16"><path d="M2 14l8-8" stroke="#4c1010" stroke-width="2.500"/><path d="M5 2l6-1 4 5-1 2-3-3-2 2z" fill="#60704c" stroke="#222"/></svg></button>
                <button type="button" aria-label="Set bookmark" class="grid w-6 place-items-center"><svg class="size-4" viewBox="0 0 16 16"><path d="M1 13L13 1" stroke="#333"/><path d="M7 7l4-4 5 5-4 4-2-1z" fill="#a01828"/><path d="M9 9l3-3v5z" fill="#282068"/></svg></button>
                <button type="button" aria-label="New directory" class="grid w-6 place-items-center"><svg class="size-4" viewBox="0 0 16 16"><path d="M.5 14.500v-7l1-1h3l1 1h5v7z" fill="#fbf58a" stroke="#111"/><path d="M12 0v3M12 6v3M8 4.500h2M14 4.500h2M9 2l1 1M15 2l-1 1M15 8l-1-1" stroke="#222"/></svg></button>
                <button type="button" aria-label="List view" class="grid h-[22px] w-6 place-items-center rounded border-2 border-[#666] bg-[#dcdce4]"><svg class="size-4" viewBox="0 0 16 16" fill="none" stroke="#20205c"><path d="M1.500 1.500h2v2h-2zM1.500 6.500h2v2h-2zM1.500 11.500h2v2h-2zM9.500 1.500h2v2h-2zM9.500 6.500h2v2h-2zM9.500 11.500h2v2h-2zM5 2.500h2M5 7.500h2M5 12.500h2M13 2.500h3M13 7.500h3M13 12.500h3"/></svg></button>
                <button type="button" aria-label="Icon view" class="grid w-6 place-items-center"><svg class="size-4" viewBox="0 0 16 16" fill="none" stroke="#20205c"><path d="M2.500 1.500h2l1 1v3h-3zM1 7.500h6M10.500 8.500h2l1 1v3h-3zM9 14.500h6"/></svg></button>
                <button type="button" aria-label="Detail view" class="grid w-6 place-items-center"><svg class="size-4" viewBox="0 0 16 16" fill="none" stroke="#20203c"><path d="M4 2.500h12M0 4.500h16M4 6.500h12M4 8.500h12M4 10.500h12M4 12.500h12M4 14.500h12" stroke-dasharray="3 1"/><path d="M.5 4v11" stroke-dasharray="1 1"/></svg></button>
                <button type="button" aria-label="Clipboard" class="grid w-6 place-items-center"><svg class="size-4" viewBox="0 0 16 16"><path d="M1.500 2.500h12v13h-12z" fill="#fafafa" stroke="#b0b0b8"/><path d="M5 4V2h2l1-1.500L9 2h2v2z" fill="#b4b4c4"/></svg></button>
            </div>
            <ul class="mt-[9px] h-[189px] border border-[#aaa] bg-[#cce8cf] py-px pl-1 outline-1 -outline-offset-2 outline-white">
                <li class="flex h-[21px] items-center"><svg class="mr-1 h-3.5 w-4"><use href="#i-folder"/></svg>..</li>
                <li class="flex h-[21px] items-center"><svg class="mr-px h-4 w-4" viewBox="0 0 16 16"><path d="M1 0h10l4 3v13H1z" fill="url(#dither)"/></svg><span class="border border-dotted border-[#c07030] bg-[#3399ff] px-px leading-[19px] text-white">51.inp</span></li>
                <li class="flex h-[21px] items-center"><svg class="mr-[3px] h-4 w-4" viewBox="0 0 16 16"><path d="M1.500.500h9l3 3v12h-12z" fill="#fff" stroke="#777"/><path d="M10.500.500v3h3V15.500h-12" fill="none" stroke="#111"/></svg>512.inp</li>
            </ul>
            <div class="mt-2 grid grid-cols-[67px_1fr_80px] items-center gap-y-1 pr-[5px] pl-1.5">
                <label for="file-name"><u>F</u>ile Name:</label>
                <input id="file-name" type="text" value="51.inp" class="mr-[5px] h-[25px] border border-[#aaa] bg-white px-[3px]">
                <button type="submit" class="h-6 rounded-xs border border-[#707070] bg-linear-to-b from-[#f2f2f2] from-50% to-[#cfcfcf]"><u>O</u>K</button>
                <label for="file-filter">File F<u>i</u>lter:</label>
                <span class="relative mr-[5px] flex">
                    <select id="file-filter" class="h-[25px] grow appearance-none border border-[#aaa] bg-white pl-[3px]"><option>Abaqus Input File (*.inp,*.pes)</option></select>
                    <span class="pointer-events-none absolute inset-y-px right-px grid w-3 place-items-center border border-[#666] bg-linear-to-b from-white to-[#ccc]"><svg class="h-1 w-[7px]"><use href="#i-arrow"/></svg></span>
                </span>
                <button type="button" class="h-6 rounded-xs border border-[#707070] bg-linear-to-b from-[#f2f2f2] from-50% to-[#cfcfcf]"><u>C</u>ancel</button>
            </div>
        </form>
    </section>

    <!-- Site mark over the window corner -->
    <div class="pointer-events-none absolute top-[7px] left-[9px] text-[#111]">
        <p class="font-['Noto_Sans_CJK_SC',sans-serif] text-[15px] leading-[21px] font-bold">中国汽车工程师之家</p>
        <p class="font-['Liberation_Mono',monospace] text-[14px] text-[#333]">www.cartech8.com</p>
    </div>
</body>
</html>
